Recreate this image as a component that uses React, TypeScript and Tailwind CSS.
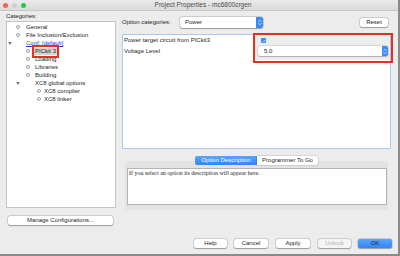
import type { ReactNode } from "react";

const Bullet = () => (
  <span className="inline-block w-[4px] h-[4px] rounded-full border border-[#a0a0a0] bg-white shrink-0" />
);

const Triangle = () => (
  <span className="inline-block w-0 h-0 border-l-[2px] border-r-[2px] border-t-[3px] border-l-transparent border-r-transparent border-t-[#7a7a7a] shrink-0" />
);

const Stepper = ({ className }: { className: string }) => (
  <span
    className={`bg-[#3b8df5] rounded-r-[2px] flex flex-col items-center justify-center gap-[1px] ${className}`}
  >
    <svg width="4" height="2" viewBox="0 0 4 2">
      <path d="M0.5 1.8 L2 0.3 L3.5 1.8" fill="none" stroke="white" strokeWidth="0.7" />
    </svg>
    <svg width="4" height="2" viewBox="0 0 4 2">
      <path d="M0.5 0.2 L2 1.7 L3.5 0.2" fill="none" stroke="white" strokeWidth="0.7" />
    </svg>
  </span>
);

const MacButton = ({
  children,
  className,
}: {
  children: ReactNode;
  className: string;
}) => (
  <div
    className={`h-[9px] flex items-center justify-center rounded-[2px] shadow-[0_0_0_0.5px_rgba(0,0,0,0.22),0_0.5px_1px_rgba(0,0,0,0.25)] ${className}`}
  >
    {children}
  </div>
);

const App = () => {
  return (
    <div className="w-[400px] h-[256px] bg-[#ececec] flex flex-col font-['Liberation_Sans',Arial,sans-serif] text-[6px] text-[#1e1e1e] border-r-2 border-b-2 border-[#8a8a8a] overflow-hidden">
      {/* title bar */}
      <div className="h-[11px] shrink-0 grid grid-cols-[1fr_auto_1fr] items-center bg-linear-to-b from-[#ebebeb] to-[#dadada] border-b border-[#c6c6c6]">
        <div className="flex items-center gap-[4px] pl-[3px]">
          <span className="w-[5px] h-[5px] rounded-full bg-[#fc5f57]" />
          <span className="w-[5px] h-[5px] rounded-full bg-[#cfcfcf]" />
          <span className="w-[5px] h-[5px] rounded-full bg-[#2ac840]" />
        </div>
        <div className="text-[6.5px] text-[#4a4a4a] pl-[8px]">
          Project Properties - mc6800crgen
        </div>
        <div />
      </div>

      <div className="flex-1 flex">
        {/* left column */}
        <div className="w-[118px] shrink-0 pl-[6px] flex flex-col">
          <div className="h-[10px] leading-[10px]">Categories:</div>
          <div className="w-[110px] h-[187px] bg-white border border-[#c4c4c4] pt-[1px] leading-[8px]">
            <div className="h-[8px] flex items-center pl-[9px]">
              <Bullet />
              <span className="ml-[6px]">General</span>
            </div>
            <div className="h-[8px] flex items-center pl-[9px]">
              <Bullet />
              <span className="ml-[6px]">File Inclusion/Exclusion</span>
            </div>
            <div className="h-[8px] flex items-center pl-[1px]">
              <Triangle />
              <span className="ml-[14px] text-[#1f3fd8] underline">
                Conf: [default]
              </span>
            </div>
            <div className="h-[8px] flex items-center pl-[19px]">
              <Bullet />
              <span className="ml-[4px] relative bg-[#d4d4d4] px-[1px] leading-[7px]">
                PICkit 3
                <span className="absolute -left-[2px] -right-[2px] -top-[3px] -bottom-[3px] border-[2px] border-[#e5301f]" />
              </span>
            </div>
            <div className="h-[8px] flex items-center pl-[19px]">
              <Bullet />
              <span className="ml-[5px]">Loading</span>
            </div>
            <div className="h-[8px] flex items-center pl-[19px]">
              <Bullet />
              <span className="ml-[5px]">Libraries</span>
            </div>
            <div className="h-[8px] flex items-center pl-[19px]">
              <Bullet />
              <span className="ml-[5px]">Building</span>
            </div>
            <div className="h-[8px] flex items-center pl-[9px]">
              <Triangle />
              <span className="ml-[15px]">XC8 global options</span>
            </div>
            <div className="h-[8px] flex items-center pl-[30px]">
              <Bullet />
              <span className="ml-[3px]">XC8 compiler</span>
            </div>
            <div className="h-[8px] flex items-center pl-[30px]">
              <Bullet />
              <span className="ml-[3px]">XC8 linker</span>
            </div>
          </div>
          <MacButton className="mt-[8px] ml-[2px] w-[105px] bg-white">
            Manage Configurations...
          </MacButton>
        </div>

        {/* right column */}
        <div className="flex-1 pl-[4px] flex flex-col">
          <div className="mt-[6px] h-[11px] flex items-center">
            <span className="w-[58px]">Option categories:</span>
            <div className="w-[83px] h-[11px] flex items-center bg-white rounded-[2px] shadow-[0_0_0_0.5px_rgba(0,0,0,0.22),0_0.5px_1px_rgba(0,0,0,0.25)]">
              <span className="flex-1 pl-[5px]">Power</span>
              <Stepper className="w-[7px] h-[11px]" />
            </div>
            <MacButton className="ml-[97px] w-[28px] bg-white">Reset</MacButton>
          </div>

          {/* options table */}
          <div className="relative mt-[6px] w-[269px] h-[115px] bg-white border border-[#a9cbef]">
            <div className="flex h-[11px]">
              <div className="w-[131px] flex items-center pl-[1px]">
                Power target circuit from PICkit3
              </div>
              <div className="flex-1 flex items-center bg-[#ededed] pl-[7px]">
                <span className="w-[5px] h-[5px] rounded-[1px] bg-[#3b8df5] flex items-center justify-center">
                  <svg width="4" height="4" viewBox="0 0 4 4">
                    <path d="M0.8 2.1 L1.6 2.9 L3.2 1" fill="none" stroke="white" strokeWidth="0.7" />
                  </svg>
                </span>
              </div>
            </div>
            <div className="flex h-[14px]">
              <div className="w-[131px] flex items-start pt-[1px] pl-[1px] leading-[8px]">
                Voltage Level
              </div>
              <div className="flex-1 bg-[#ededed] pl-[4px] pr-[2px] pb-[4px]">
                <div className="h-[10px] flex items-center bg-white rounded-[2px] shadow-[0_0_0_0.5px_rgba(0,0,0,0.15),0_0.5px_1px_rgba(0,0,0,0.2)]">
                  <span className="flex-1 pl-[6px]">5.0</span>
                  <Stepper className="w-[6px] h-[10px]" />
                </div>
              </div>
            </div>
            <div className="absolute left-[130px] -top-[2px] w-[140px] h-[30px] border-[2px] border-[#e5301f]" />
          </div>

          {/* description tabs */}
          <div className="relative z-10 mt-[7px] ml-[73px] flex h-[9px] w-[123px]">
            <div className="w-[62px] flex items-center justify-center rounded-l-[2px] bg-linear-to-b from-[#5aa4fa] to-[#2f86f5] text-white">
              Option Description
            </div>
            <div className="w-[61px] flex items-center justify-center rounded-r-[2px] bg-white shadow-[0_0_0_0.5px_rgba(0,0,0,0.2)]">
              Programmer To Go
            </div>
          </div>
          <div className="-mt-[4px] ml-[3px] w-[263px] h-[49px] bg-[#e3e3e3] rounded-[3px] pt-[7px] pl-[2px]">
            <div className="w-[260px] h-[37px] bg-white border border-[#b4b4b4] pl-[1px] font-['Liberation_Serif','Times_New_Roman',serif] text-[6px] leading-[8px]">
              If you select an option its description will appear here.
            </div>
          </div>

          {/* bottom buttons */}
          <div className="mt-[29px] ml-[72px] flex">
            <MacButton className="w-[33px] bg-white">Help</MacButton>
            <MacButton className="ml-[7px] w-[34px] bg-white">Cancel</MacButton>
            <MacButton className="ml-[8px] w-[34px] bg-white">Apply</MacButton>
            <MacButton className="ml-[8px] w-[33px] bg-[#f4f4f4] text-[#b0b0b0]">
              Unlock
            </MacButton>
            <MacButton className="ml-[7px] w-[34px] bg-linear-to-b from-[#5aa4fa] to-[#2f86f5] text-[#1a1a1a]">
              OK
            </MacButton>
          </div>
        </div>
      </div>
    </div>
  );
};

export default App;
